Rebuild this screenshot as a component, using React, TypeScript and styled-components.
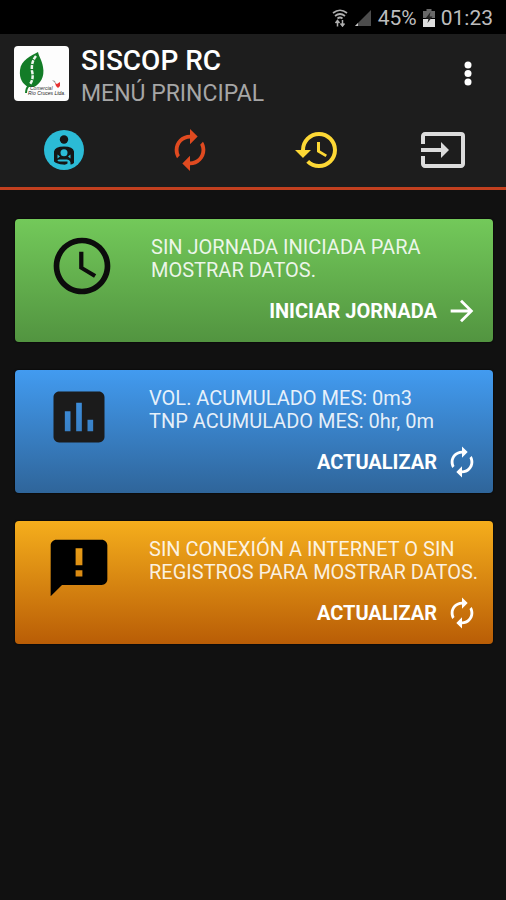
import React from "react";
import styled, { createGlobalStyle } from "styled-components";
import {
  MdAutorenew,
  MdHistory,
  MdInput,
  MdAccessTime,
  MdAssessment,
  MdArrowForward,
} from "react-icons/md";

const GlobalStyle = createGlobalStyle`
  *, *::before, *::after { box-sizing: border-box; }
  body {
    margin: 0;
    background: #111111;
    font-family: Roboto, "Liberation Sans", sans-serif;
  }
  button { font-family: inherit; }
`;

const Screen = styled.div`
  min-height: 100vh;
  background: #111111;
  color: #ffffff;
`;

const StatusBar = styled.div`
  display: flex;
  align-items: center;
  justify-content: flex-end;
  gap: 6px;
  height: 34px;
  padding: 2px 13px 0 0;
  background: #000000;
  color: #bdbdbd;
  font-size: 21px;
  line-height: 32px;
  svg { display: block; flex: none; }
`;

const StatusText = styled.span`
  white-space: nowrap;
`;

const TopBar = styled.header`
  background: #1d1d1d;
  border-bottom: 3px solid #c2401f;
`;

const Heading = styled.div`
  display: flex;
  align-items: center;
  height: 79px;
  padding: 0 14px;
  gap: 12px;
`;

const Logo = styled.svg`
  display: block;
  flex: none;
  width: 55px;
  height: 55px;
`;

const Titles = styled.div`
  flex: 1;
  min-width: 0;
  padding-top: 7px;
`;

const Title = styled.h1`
  margin: 0;
  font-size: 28px;
  line-height: 34px;
  font-weight: 500;
`;

const Subtitle = styled.p`
  margin: 0;
  color: #a6a6a6;
  font-size: 23px;
  line-height: 32px;
`;

const MenuButton = styled.button`
  display: grid;
  place-items: center;
  width: 48px;
  height: 48px;
  padding: 0;
  border: 0;
  background: none;
  color: #ffffff;
`;

const Tabs = styled.nav`
  display: grid;
  grid-template-columns: repeat(4, 1fr);
  height: 74px;
`;

const Tab = styled.button<{ $color: string }>`
  display: grid;
  place-items: center;
  padding: 0 0 0 1px;
  border: 0;
  background: none;
  color: ${(p) => p.$color};
  svg { display: block; }
`;

const Cards = styled.main`
  display: grid;
  gap: 28px;
  padding: 29px 13px 29px 15px;
`;

const Card = styled.section<{ $from: string; $to: string; $indent: number }>`
  display: grid;
  grid-template-columns: 68px 1fr;
  column-gap: ${(p) => (p.$indent > 30 ? 35 : 36)}px;
  height: 123px;
  padding: 13px 14px 0 ${(p) => p.$indent}px;
  border-radius: 4px;
  background: linear-gradient(${(p) => p.$from}, ${(p) => p.$to});
  box-shadow: 0 0 2px #000000;
`;

const CardIcon = styled.div<{ $color: string }>`
  color: ${(p) => p.$color};
  svg { display: block; }
`;

const CardBody = styled.div`
  display: flex;
  flex-direction: column;
  min-width: 0;
`;

const Message = styled.p`
  margin: 4px 0 0;
  font-size: 20px;
  line-height: 23px;
  color: rgba(255, 255, 255, 0.88);
  white-space: pre-line;
`;

const Action = styled.button`
  display: flex;
  align-items: center;
  align-self: flex-end;
  gap: 8px;
  height: 32px;
  margin-top: 13px;
  padding: 0;
  border: 0;
  background: none;
  color: #ffffff;
  font-size: 20px;
  font-weight: 700;
  line-height: 32px;
  svg { display: block; }
`;

const WifiIcon = () => (
  <svg width="16" height="18" viewBox="0 0 16 18" fill="none" stroke="#b0b0b0" aria-hidden="true">
    <path d="M1 4Q8-1.500 15 4M3 7Q8 3 13 7M5.500 9.500Q8 7.500 10.500 9.500" strokeWidth="1.700" />
    <path d="M5.500 17.500v-6M3.500 14l2-2.500 2 2.500M10.500 11v6M8.500 14.500l2 2.500 2-2.500" strokeWidth="1.500" />
  </svg>
);

const SignalIcon = () => (
  <svg width="18" height="18" viewBox="0 0 18 18" aria-hidden="true">
    <path d="M17 1v16H1z" fill="#4c4c4c" />
    <path d="M4 14v3H1z" fill="#c8c8c8" />
  </svg>
);

const BatteryIcon = () => (
  <svg width="12" height="18" viewBox="0 0 12 18" aria-hidden="true">
    <path d="M3.500 0h5v2H12v7H0V2h3.500z" fill="#686868" />
    <path d="M0 10h12v8H0z" fill="#dedede" />
    <path d="M7.500 3L2.500 9.500h3L4.500 14l5-6.500h-3z" fill="#222222" />
  </svg>
);

const ChildCareIcon = () => (
  <svg width="42" height="42" viewBox="0 0 42 42" aria-hidden="true">
    <circle cx="21" cy="21" r="20" fill="#2bbbd6" />
    <circle cx="21" cy="10.500" r="4.200" fill="#151515" />
    <path d="M11 22.500Q12 17.500 21 17.500Q30 17.500 31 22.500V34Q29 35.500 27.500 35.500Q28 31 24 30.500H16.500Q14.500 30.500 14.500 31.500Q14.500 32.500 17 32.500H24.500V34.500Q23 36 20 35.500Q14 35 11 32.500z" fill="#151515" />
    <circle cx="21" cy="23.800" r="3.500" fill="#2bbbd6" />
    <path d="M14.500 25.500V29.500L17 27.500zM27.500 25.500V29.500L25 27.500z" fill="#2bbbd6" />
  </svg>
);

const FeedbackIcon = () => (
  <svg width="68" height="68" viewBox="0 0 24 24" fill="currentColor" aria-hidden="true">
    <path
      fillRule="evenodd"
      d="M20 2H4c-1.100 0-1.990.9-1.990 2L2 22l4-4h14c1.100 0 2-.9 2-2V4c0-1.100-.9-2-2-2zM13.200 11h-2.400V5h2.400zM13.200 15h-2.400v-2.200h2.400z"
    />
  </svg>
);

const CompanyLogo = () => (
  <Logo viewBox="0 0 55 55" role="img" aria-label="Comercial Río Cruces Ltda.">
    <rect width="55" height="55" rx="4" fill="#fdfdfd" />
    <path d="M24 6C17 10 7 14 6 24C5 33 9 38 14 41L20 41C26 38 31 31 29 21C28 14 25 11 24 6z" fill="#137c27" />
    <path d="M22 10Q17 16 18 25Q20 33 16 38" fill="none" stroke="#eef7ee" strokeWidth="2.500" strokeDasharray="4 1" />
    <path d="M16 38Q12 42 12 47" fill="none" stroke="#137c27" strokeWidth="2" />
    <path d="M38 34l3 1 1 3z" fill="#999999" />
    <path d="M41 37l2 1 3-2v4l-2 2-2-2z" fill="#e63232" />
    <text x="16" y="44" fontFamily="Liberation Sans, sans-serif" fontStyle="italic" fontSize="5" fill="#333333">Comercial</text>
    <text x="14" y="49" fontFamily="Liberation Sans, sans-serif" fontStyle="italic" fontSize="5" fill="#222222">Río Cruces Ltda.</text>
  </Logo>
);

const DotsIcon = () => (
  <svg width="10" height="26" viewBox="0 0 10 26" fill="currentColor" aria-hidden="true">
    <circle cx="5" cy="4" r="3.500" />
    <circle cx="5" cy="12.500" r="3.500" />
    <circle cx="5" cy="21" r="3.500" />
  </svg>
);

const tabs = [
  { label: "Personal", color: "#2bbbd6", icon: <ChildCareIcon /> },
  { label: "Sincronizar", color: "#e04a20", icon: <MdAutorenew size={46} /> },
  { label: "Historial", color: "#fdd835", icon: <MdHistory size={48} /> },
  { label: "Salir", color: "#dcdcdc", icon: <MdInput size={48} /> },
];

const cards = [
  {
    from: "#73c95a",
    to: "#529440",
    indent: 33,
    iconColor: "#0c0c0c",
    icon: <MdAccessTime size={68} />,
    message: "SIN JORNADA INICIADA PARA\nMOSTRAR DATOS.",
    action: "INICIAR JORNADA",
    actionIcon: <MdArrowForward size={34} />,
  },
  {
    from: "#429bf0",
    to: "#2f659a",
    indent: 30,
    iconColor: "#1b1b1b",
    icon: <MdAssessment size={68} />,
    message: "VOL. ACUMULADO MES: 0m3\nTNP ACUMULADO MES: 0hr, 0m",
    action: "ACTUALIZAR",
    actionIcon: <MdAutorenew size={34} />,
  },
  {
    from: "#f5ae1c",
    to: "#b95d06",
    indent: 30,
    iconColor: "#000000",
    icon: <FeedbackIcon />,
    message: "SIN CONEXIÓN A INTERNET O SIN\nREGISTROS PARA MOSTRAR DATOS.",
    action: "ACTUALIZAR",
    actionIcon: <MdAutorenew size={34} />,
  },
];

export default function App() {
  return (
    <Screen>
      <GlobalStyle />
      <StatusBar>
        <WifiIcon />
        <SignalIcon />
        <StatusText>45%</StatusText>
        <BatteryIcon />
        <StatusText>01:23</StatusText>
      </StatusBar>
      <TopBar>
        <Heading>
          <CompanyLogo />
          <Titles>
            <Title>SISCOP RC</Title>
            <Subtitle>MENÚ PRINCIPAL</Subtitle>
          </Titles>
          <MenuButton aria-label="Más opciones">
            <DotsIcon />
          </MenuButton>
        </Heading>
        <Tabs>
          {tabs.map((t) => (
            <Tab key={t.label} $color={t.color} aria-label={t.label}>
              {t.icon}
            </Tab>
          ))}
        </Tabs>
      </TopBar>
      <Cards>
        {cards.map((c) => (
          <Card key={c.message} $from={c.from} $to={c.to} $indent={c.indent}>
            <CardIcon $color={c.iconColor}>{c.icon}</CardIcon>
            <CardBody>
              <Message>{c.message}</Message>
              <Action>
                {c.action}
                {c.actionIcon}
              </Action>
            </CardBody>
          </Card>
        ))}
      </Cards>
    </Screen>
  );
}
